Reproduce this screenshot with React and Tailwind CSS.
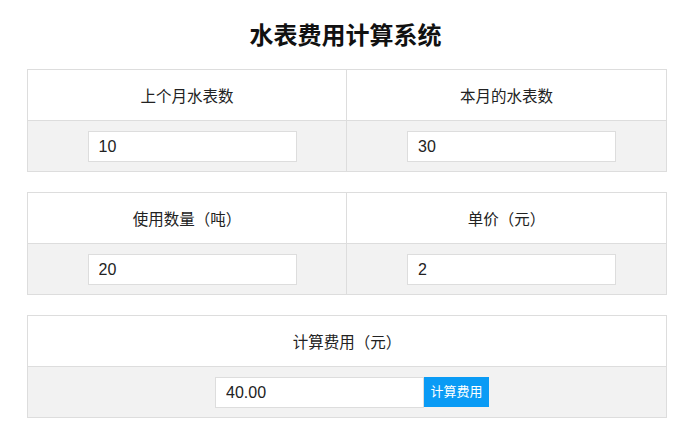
import { useState } from 'react'

const font = { fontFamily: '"Liberation Sans", "Noto Sans CJK SC", sans-serif' }

function Field({ value, onChange }) {
  return (
    <input
      value={value}
      onChange={e => onChange(e.target.value)}
      className="w-[209px] h-[31px] bg-white border border-[#ddd] px-[10px] pt-[2px] text-[16px] text-[#222] outline-none"
    />
  )
}

function Pair({ left, right }) {
  return (
    <div className="border border-[#ddd] grid grid-cols-2">
      <div className="h-[51px] pt-[3px] flex items-center justify-center border-r border-b border-[#ddd] text-[15.5px] text-[#222]">{left.label}</div>
      <div className="h-[51px] pt-[3px] flex items-center justify-center border-b border-[#ddd] text-[15.5px] text-[#222]">{right.label}</div>
      <div className="h-[50px] flex items-center justify-center pl-[10px] bg-[#f2f2f2] border-r border-[#ddd]">
        <Field value={left.value} onChange={left.set} />
      </div>
      <div className="h-[50px] flex items-center justify-center pl-[10px] bg-[#f2f2f2]">
        <Field value={right.value} onChange={right.set} />
      </div>
    </div>
  )
}

export default function App() {
  const [last, setLast] = useState('10')
  const [cur, setCur] = useState('30')
  const [used, setUsed] = useState('20')
  const [price, setPrice] = useState('2')
  const [total, setTotal] = useState('40.00')

  function calc() {
    setTotal((Number(used) * Number(price)).toFixed(2))
  }

  return (
    <main className="min-h-screen bg-white" style={font}>
      {/* 标题 */}
      <div className="h-[69px] flex items-center justify-center pt-[2px]">
        <h1 className="text-[24px] font-bold text-[#111]">水表费用计算系统</h1>
      </div>

      <div className="w-[640px] ml-[27px] flex flex-col gap-[20px]">
        <Pair
          left={{ label: '上个月水表数', value: last, set: setLast }}
          right={{ label: '本月的水表数', value: cur, set: setCur }}
        />
        <Pair
          left={{ label: '使用数量（吨）', value: used, set: setUsed }}
          right={{ label: '单价（元）', value: price, set: setPrice }}
        />

        {/* 结果 */}
        <div className="border border-[#ddd]">
          <div className="h-[51px] pt-[3px] flex items-center justify-center border-b border-[#ddd] text-[15.5px] text-[#222]">计算费用（元）</div>
          <div className="h-[50px] flex items-center justify-center pl-[10px] bg-[#f2f2f2]">
            <input
              value={total}
              onChange={e => setTotal(e.target.value)}
              className="w-[209px] h-[31px] bg-white border border-[#ddd] px-[10px] pt-[2px] text-[16px] text-[#222] outline-none"
            />
            <button onClick={calc} className="w-[65px] h-[30px] bg-[#0a9bf5] text-white text-[13px]">计算费用</button>
          </div>
        </div>
      </div>
    </main>
  )
}
